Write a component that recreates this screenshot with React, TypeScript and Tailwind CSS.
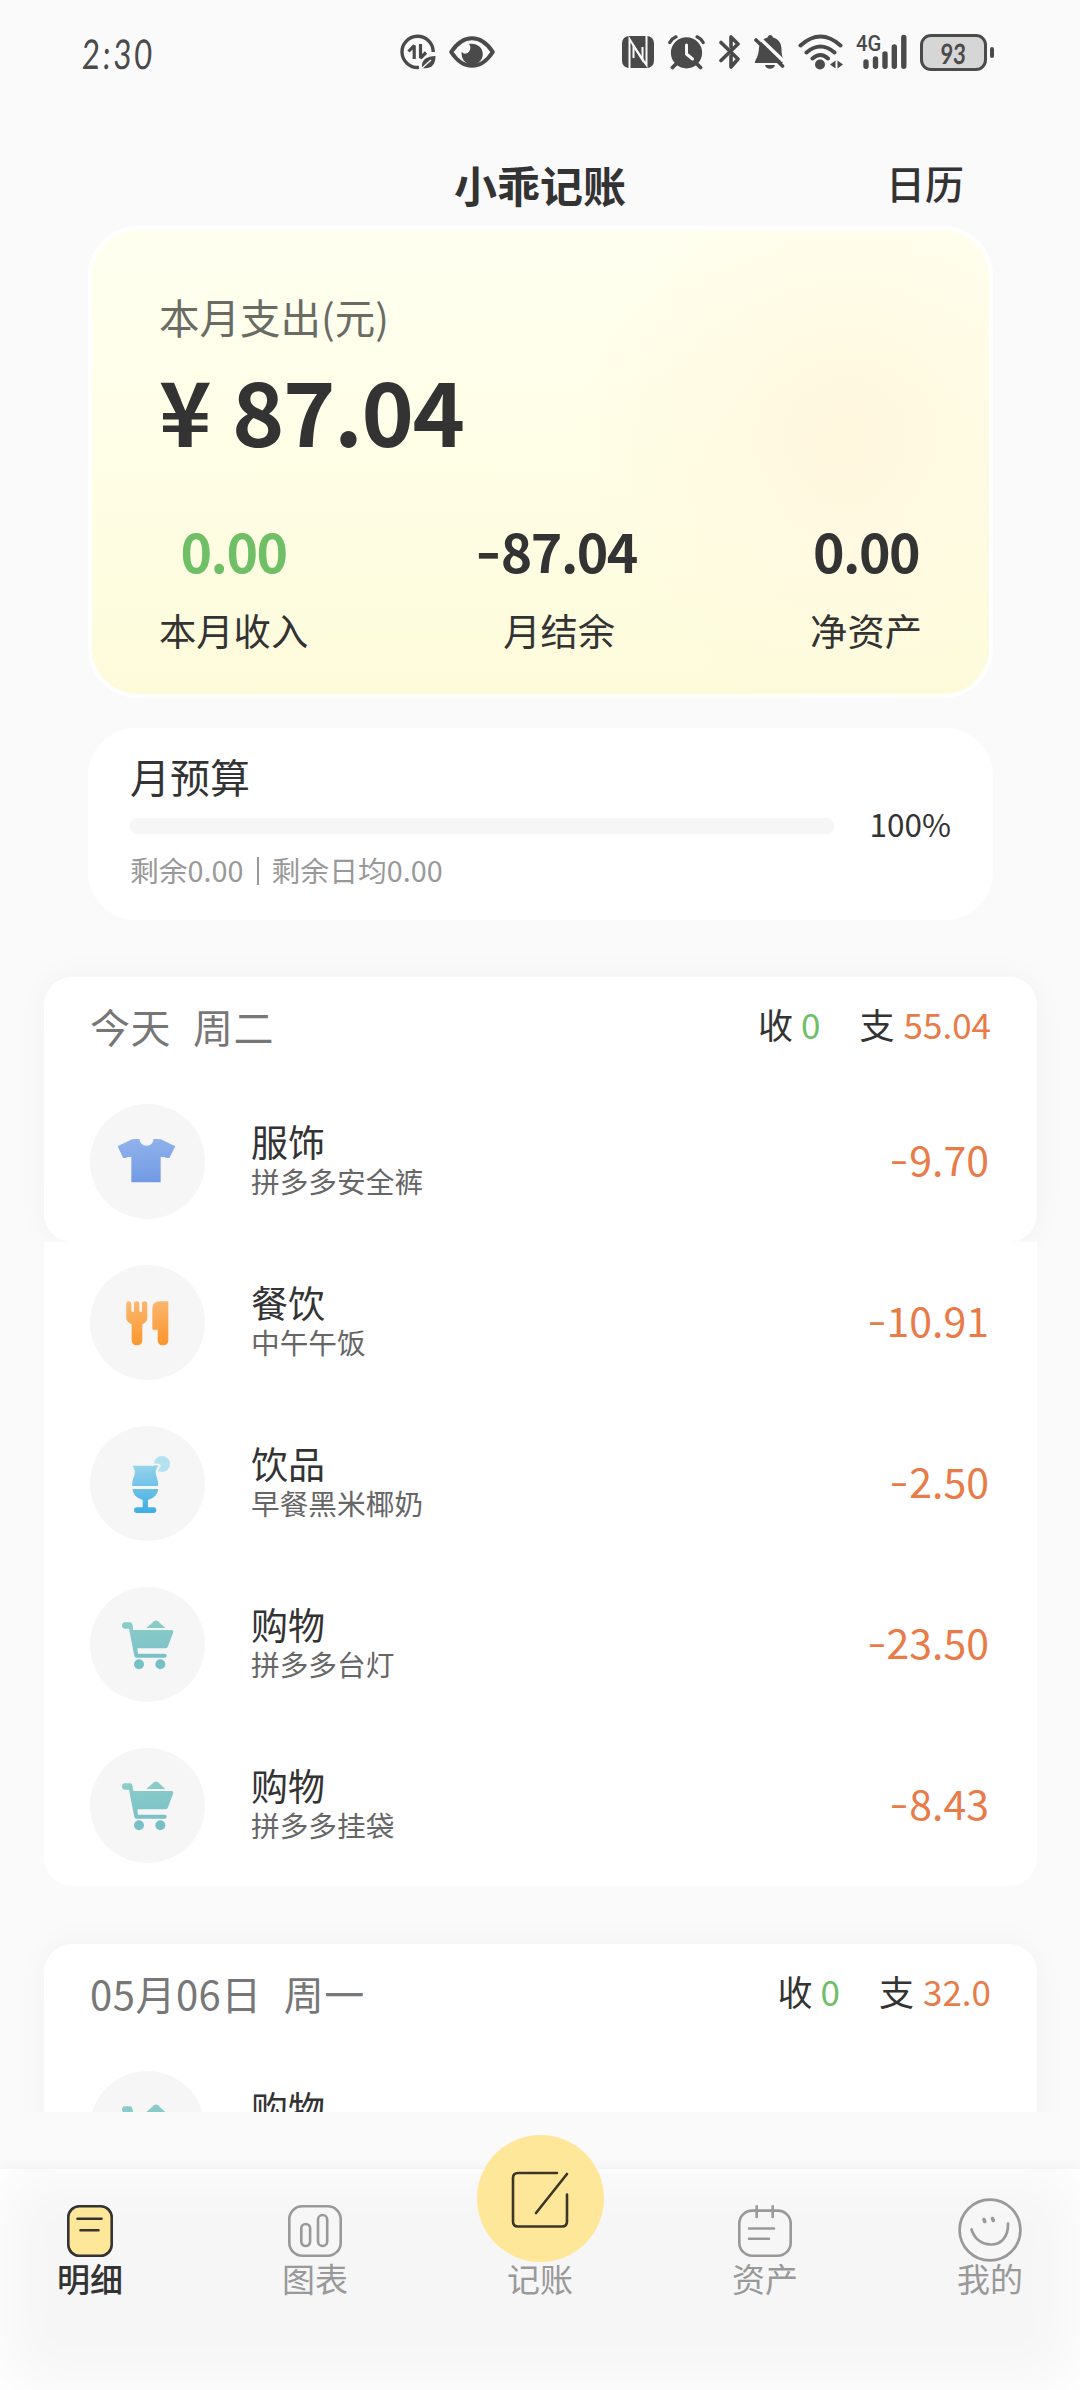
import type { ReactNode } from "react";

const INK = "#4a4a4a";

function StatusBar() {
  return (
    <div className="flex h-[104px] shrink-0 items-start pt-[34px] text-[#4a4a4a]">
      <div className="ml-[82px] w-[318px]">
        <span className="inline-block origin-left scale-x-[0.75] -skew-x-3 font-['Lato','Noto_Sans',sans-serif] text-[41px] leading-[40px] tracking-[4px]">
          2:30
        </span>
      </div>
      {/* mobile data saver */}
      <svg width="36" height="36" viewBox="0 0 36 36" fill="none" stroke={INK}>
        <path d="M19 33.400A15.600 15.600 0 1 1 33.200 18" strokeWidth="3.400" />
        <path d="M8.500 17.500L14.200 11.500V25M20.500 10V24L26 18.500" strokeWidth="3.200" strokeLinejoin="bevel" />
        <path d="M22 34C21 25 27 22.500 35.500 22C35.500 30 32 35.500 22 34Z" fill={INK} stroke="none" />
        <path d="M21 35L31 26" stroke="#fafafa" strokeWidth="1.400" />
      </svg>
      {/* eye comfort */}
      <svg className="ml-[13px]" width="46" height="36" viewBox="0 0 46 36">
        <path d="M2.200 18C8 9 15 4.200 23 4.200S38 9 43.800 18C38 27 31 31.800 23 31.800S8 27 2.200 18Z" fill="none" stroke={INK} strokeWidth="4" strokeLinejoin="round" />
        <path d="M20 10C22.500 13 21.500 18.500 17 19.500C15 20 13.500 19 12.800 17.500C11.500 24 16 30.500 23 30.500C29 30.500 33.800 26 33.800 20C33.800 13 27 8.500 20 10Z" fill={INK} />
      </svg>
      {/* nfc */}
      <svg className="ml-[127px]" width="32" height="36" viewBox="0 0 32 36">
        <rect x="0" y="2" width="32" height="32" rx="7" fill={INK} />
        <g fill="none" stroke="#fafafa" strokeWidth="2">
          <path d="M7.500 34V5L20.500 26V13" />
          <path d="M11.500 13V24M11.500 24V12L24.500 31V2" />
        </g>
      </svg>
      {/* alarm */}
      <svg className="ml-[14px]" width="37" height="36" viewBox="0 0 37 36" fill="none" stroke={INK} strokeLinecap="round">
        <circle cx="18.500" cy="18.800" r="15.600" fill={INK} stroke="none" />
        <path d="M1.800 8.500Q4 4.500 8 2.800M35.200 8.500Q33 4.500 29 2.800" strokeWidth="3.200" />
        <path d="M8 30L4.500 33.500M29 30L32.500 33.500" strokeWidth="3.800" />
        <path d="M18.500 11V20L24.500 25" stroke="#fafafa" strokeWidth="3" />
      </svg>
      {/* bluetooth */}
      <svg className="ml-[14px]" width="22" height="36" viewBox="0 0 22 36" fill="none" stroke={INK} strokeWidth="3.600" strokeLinecap="round" strokeLinejoin="round">
        <path d="M2 8.500L19 25L12 33V22M2 26.500L19 10L12 3V13" />
      </svg>
      {/* muted bell */}
      <svg className="ml-[13px]" width="31" height="36" viewBox="0 0 31 36">
        <path d="M5 14C5.500 8 9 4.500 13.500 3.500C14 0 18.500 0 19 3.500C25 5 27.500 10 27.500 15C27.500 20 28 23 30 26.500V29H1C0 27 4.500 24 5 14Z" fill={INK} />
        <path d="M11 31H21Q20 34.800 16 34.800T11 31Z" fill={INK} />
        <path d="M3.500 2L31 28.500" stroke="#fafafa" strokeWidth="3.500" />
        <path d="M2 6L28.500 32" stroke={INK} strokeWidth="3.600" strokeLinecap="round" />
      </svg>
      {/* wifi */}
      <svg className="ml-[13px]" width="45" height="36" viewBox="0 0 45 36" fill="none" stroke={INK} strokeWidth="4" strokeLinecap="round">
        <path d="M2.500 11.500Q22.500-6.500 42.500 11.500M8.500 18.500Q22.500 6.500 36.500 18.500M14.500 24.500Q22.500 17.500 30 24.500" />
        <circle cx="22" cy="30.500" r="5" fill={INK} stroke="none" />
        <path d="M37.500 26.500V34.500L32 30.500ZM39.500 26.500V34.500L45 30.500Z" fill={INK} stroke="none" />
      </svg>
      {/* signal */}
      <div className="relative ml-[13px] h-[36px] w-[51px]">
        <span className="absolute -top-px left-0 origin-left scale-x-[0.9] font-['Roboto',sans-serif] text-[22.500px] font-medium leading-[20px]">4G</span>
        <svg width="51" height="36" viewBox="0 0 51 36" stroke={INK} strokeWidth="5.400" strokeLinecap="round">
          <path d="M10 28V32.300M19.500 25V32.300M29 20V32.300M38.300 13V32.300M47.800 3.500V32.300" />
        </svg>
      </div>
      {/* battery */}
      <div className="ml-[13px] flex items-center">
        <div className="flex h-[37px] w-[67px] items-center justify-center rounded-[11px] border-[3px] border-[#4a4a4a] bg-[#d6d6d6] font-['Lato','Noto_Sans',sans-serif] text-[28px] leading-none">
          <span className="inline-block scale-x-[0.78] -skew-x-3 font-bold">93</span>
        </div>
        <div className="ml-[3px] h-[11px] w-[4px] rounded-full bg-[#4a4a4a]" />
      </div>
    </div>
  );
}

/** Renders an amount; the minus sign is widened and raised to sit at digit centre. */
function Amount({ value }: { value: string }) {
  if (!value.startsWith("-")) return <>{value}</>;
  return (
    <>
      <span className="mr-[0.02em] inline-block origin-right -translate-y-[0.04em] scale-x-[1.3]">-</span>
      {value.slice(1)}
    </>
  );
}

function Stat({ value, label, className }: { value: string; label: string; className: string }) {
  return (
    <div className="flex flex-col items-center">
      <div className={`text-[53.500px] font-bold leading-none tracking-[-1.500px] ${className}`}>
        <Amount value={value} />
      </div>
      <div className="mt-[36px] text-[37.300px] leading-none">{label}</div>
    </div>
  );
}

function SummaryCard() {
  return (
    <section className="ml-[88px] mr-[87px] h-[472px] rounded-[50px] border-[4px] border-white bg-[radial-gradient(circle_at_84%_45%,#fff7de_0%,#fff8e0b0_14%,#fffbe600_34%),linear-gradient(180deg,#fffff0_0%,#fffee6_50%,#fdfbda_100%)] pl-[67px] pr-[67px] pt-[67px]">
      <div className="text-[40.500px] leading-none text-[#6b6b66]">本月支出(元)</div>
      <div className="mt-[26px] flex items-center gap-[22px] text-[89px] font-bold leading-none tracking-[-1.500px]">
        <span>¥</span>
        <span>87.04</span>
      </div>
      <div className="mt-[70px] flex justify-between">
        <Stat value="0.00" label="本月收入" className="text-[#6fbf67]" />
        <Stat value="-87.04" label="月结余" className="" />
        <Stat value="0.00" label="净资产" className="" />
      </div>
    </section>
  );
}

function BudgetCard() {
  return (
    <section className="ml-[88px] mr-[87px] mt-[30px] h-[192px] rounded-[48px] bg-white px-[42px] pt-[28px]">
      <div className="text-[40px] leading-none">月预算</div>
      <div className="mt-[14px] flex h-[32px] items-center">
        <div className="h-[16px] w-[706px] rounded-[7px] bg-[#f6f6f6]" />
        <div className="mb-[5px] ml-[36px] text-[31.500px] leading-none">100%</div>
      </div>
      <div className="mt-[14px] flex items-center text-[28.800px] leading-none text-[#999]">
        <span>剩余0.00</span>
        <span className="mx-[13px] h-[28px] w-[2px] translate-y-px bg-[#999]" />
        <span>剩余日均0.00</span>
      </div>
    </section>
  );
}

function Gradients() {
  const stops: [string, string, string][] = [
    ["shirt", "#92b2ec", "#6d97e3"],
    ["meal", "#fdb975", "#f99325"],
    ["drink", "#a3d8ec", "#41afe6"],
    ["cart", "#8ccdc8", "#74bcc8"],
  ];
  return (
    <svg className="absolute" width="0" height="0">
      <defs>
        {stops.map(([id, from, to]) => (
          <linearGradient key={id} id={id} gradientUnits="userSpaceOnUse" x1="150" y1="100" x2="165" y2="255">
            <stop offset="0" stopColor={from} />
            <stop offset="1" stopColor={to} />
          </linearGradient>
        ))}
      </defs>
    </svg>
  );
}

const icons: Record<string, ReactNode> = {
  shirt: (
    <path
      fill="url(#shirt)"
      d="M126 106Q134 104 148 105Q151 125 170 125Q188 125 191 105Q204 104 212 106L256 127L238 162L231 162Q225 158 212 159V235H124V159Q112 158 106 162L99 161L83 127Z"
    />
  ),
  meal: (
    <g fill="url(#meal)">
      <path d="M109 116Q109 109 116 109T124 116V136Q124 142 128 142T132 136V116Q132 109 140 109T148 116V136Q148 142 152 142T156 136V116Q156 109 164 109T172 116V160Q172 171 157 178V225Q157 241 141 241T125 225V178Q109 171 109 160Z" />
      <path d="M235 109V225Q235 241 219 241T203 225V194H190Q187 194 187 190V130Q187 109 211 109Z" />
    </g>
  ),
  drink: (
    <>
      <circle cx="216" cy="114" r="24" fill="#b5e0ee" />
      <path d="M122 119Q126 115 130 115H202Q209 116 210 120Q202 126 202 135" stroke="#f7f7f7" strokeWidth="5" fill="none" />
      <g fill="url(#drink)">
        <path d="M126 119H204Q198 124 197 134Q196 145 201 155Q206 168 204 180H127Q125 168 130 157Q135 145 134 134Q133 124 126 119Z" />
        <path d="M127 189H205Q202 213 174 222V244H192Q199 245 199 252.500T192 261H139Q132 260 132 252.500T139 244H158V222Q130 213 127 189Z" />
      </g>
    </>
  ),
  cart: (
    <>
      <g fill="url(#cart)">
        <path d="M169 123L192 103Q198 98 204 103L226 123Z" />
        <path d="M104 106H121Q125 106 127 111L130 129H245Q251 129 250 135L234 178Q232 184 226 184H142L144 200H226Q230 201 230 206T226 212H139Q134 212 133 207L117 125H104Q96 124 96 115.500T104 106Z" />
      </g>
      <circle cx="147" cy="232" r="15" fill="#78c0c8" />
      <circle cx="211" cy="232" r="15" fill="#78c0c8" />
    </>
  ),
};

type Entry = { icon: string; name: string; note: string; amount: string };

function Row({ icon, name, note, amount }: Entry) {
  return (
    <div className="flex h-[161px] items-center pl-[46px] pr-[48px]">
      <div className="size-[115px] rounded-full bg-[#f6f6f6]">
        <svg width="115" height="115" viewBox="0 0 345 345">
          {icons[icon]}
        </svg>
      </div>
      <div className="mb-[5px] ml-[46px] flex-1">
        <div className="text-[37px] leading-none">{name}</div>
        <div className="mt-[7px] text-[28.700px] leading-none text-[#666]">{note}</div>
      </div>
      <div className="mb-[6px] text-[41px] leading-none text-[#e87b48]">
        <Amount value={amount} />
      </div>
    </div>
  );
}

function DayHeader({ date, weekday, income, expense }: { date: string; weekday: string; income: string; expense: string }) {
  return (
    <div className="flex h-[104px] items-start px-[46px] pt-[29px]">
      <div className="flex flex-1 gap-[22px] text-[40px] leading-none tracking-[0.500px] text-[#777]">
        <span>{date}</span>
        <span>{weekday}</span>
      </div>
      <div className="flex text-[35px] leading-none">
        <span>收</span>
        <span className="ml-[8px] text-[#6fbf67]">{income}</span>
        <span className="ml-[39px]">支</span>
        <span className="ml-[9px] text-[#e87b48]">{expense}</span>
      </div>
    </div>
  );
}

const today: Entry[] = [
  { icon: "meal", name: "餐饮", note: "中午午饭", amount: "-10.91" },
  { icon: "drink", name: "饮品", note: "早餐黑米椰奶", amount: "-2.50" },
  { icon: "cart", name: "购物", note: "拼多多台灯", amount: "-23.50" },
  { icon: "cart", name: "购物", note: "拼多多挂袋", amount: "-8.43" },
];

function NavItem({ label, active, children }: { label: string; active?: boolean; children: ReactNode }) {
  return (
    <div className={`flex w-[66px] flex-col items-center ${active ? "font-medium text-[#333]" : "text-[#999]"}`}>
      <div className="flex h-[93px] items-end justify-center">{children}</div>
      <div className="whitespace-nowrap text-[33px] leading-none">{label}</div>
    </div>
  );
}

function TabBar() {
  return (
    <nav className="relative z-10 flex h-[221px] justify-between bg-[#f6f6f6] px-[57px] shadow-[0_-2px_10px_rgba(0,0,0,0.04),inset_0_0_60px_4px_#fff]">
      <NavItem label="明细" active>
        <svg className="mb-[5px]" width="46" height="52" viewBox="0 0 46 52" stroke="#333" strokeWidth="2.600" strokeLinecap="round">
          <rect x="1.300" y="1.300" width="43.400" height="49.400" rx="11" fill="#ffe799" />
          <path d="M10.500 13.700H34.500M13.500 25.200H31.500" />
        </svg>
      </NavItem>
      <NavItem label="图表">
        <svg className="mb-[5px]" width="54" height="52" viewBox="0 0 54 52" fill="none" stroke="#999" strokeWidth="2.600">
          <rect x="1.300" y="1.300" width="51.400" height="49.400" rx="13" />
          <rect x="13.300" y="19" width="8.800" height="22" rx="4.400" />
          <rect x="30" y="10" width="9.200" height="31" rx="4.600" />
        </svg>
      </NavItem>
      <NavItem label="记账">
        <div className="flex size-[127px] shrink-0 items-center justify-center rounded-full bg-[#ffe799]">
          <svg width="58" height="58" viewBox="0 0 58 58" fill="none" stroke="#3a3628" strokeWidth="2.600" strokeLinecap="round">
            <path d="M46 3H7Q2 3 2 8V51.500Q2 56.500 7 56.500H51Q56 56.500 56 51.500V24.500" />
            <path d="M56 4L25 43" />
          </svg>
        </div>
      </NavItem>
      <NavItem label="资产">
        <svg className="mb-[5px]" width="54" height="52" viewBox="0 0 54 52" fill="none" stroke="#999" strokeWidth="2.600" strokeLinecap="round">
          <rect x="1.300" y="5.600" width="51.400" height="45.100" rx="13" />
          <path d="M18.700 1.300V12M34.700 1.300V12M11 23.500H36M11 33.700H31" />
        </svg>
      </NavItem>
      <NavItem label="我的">
        <svg width="64" height="64" viewBox="0 0 64 64" fill="none" stroke="#999" strokeWidth="2.700" strokeLinecap="round">
          <circle cx="32" cy="32" r="30.400" />
          <path d="M13.500 31.500C16 39 22 46.500 33 46.500C43 46.500 50.500 39 50 25.500" />
          <path d="M26 21.500L26.800 23.500M34.500 20.500L35.300 22.500" strokeWidth="3.600" />
        </svg>
      </NavItem>
    </nav>
  );
}

export default function App() {
  return (
    <div className="relative flex h-[2390px] w-[1080px] flex-col overflow-hidden bg-[#fafafa] font-['Noto_Sans_CJK_SC',sans-serif] text-[#333]">
      <Gradients />
      <StatusBar />
      <header className="flex h-[122px] shrink-0 items-start justify-between pl-[454px] pr-[116px] pt-[59px]">
        <h1 className="text-[43px] font-bold leading-none">小乖记账</h1>
        <span className="text-[39px] font-medium leading-none">日历</span>
      </header>
      <div className="h-[1886px] shrink-0 overflow-hidden">
        <SummaryCard />
        <BudgetCard />
        <section className="ml-[44px] mr-[43px] mt-[57px]">
          <div className="h-[265px] rounded-[28px] bg-white shadow-[0_0_34px_rgba(0,0,0,0.035)]">
            <DayHeader date="今天" weekday="周二" income="0" expense="55.04" />
            <Row icon="shirt" name="服饰" note="拼多多安全裤" amount="-9.70" />
          </div>
          <div className="relative rounded-b-[28px] bg-white">
            {today.map((e) => (
              <Row key={e.note} {...e} />
            ))}
          </div>
        </section>
        <section className="ml-[44px] mr-[43px] mt-[58px] h-[420px] rounded-[28px] bg-white shadow-[0_0_34px_rgba(0,0,0,0.035)]">
          <DayHeader date="05月06日" weekday="周一" income="0" expense="32.0" />
          <div className="flex h-[161px] items-center pl-[46px]">
            <div className="size-[115px] rounded-full bg-[#f6f6f6]">
              <svg width="115" height="115" viewBox="0 0 345 345">
                {icons.cart}
              </svg>
            </div>
            <div className="mb-[41px] ml-[46px] text-[37px] leading-none">购物</div>
          </div>
        </section>
      </div>
      <div className="h-[57px] shrink-0" />
      <TabBar />
    </div>
  );
}
